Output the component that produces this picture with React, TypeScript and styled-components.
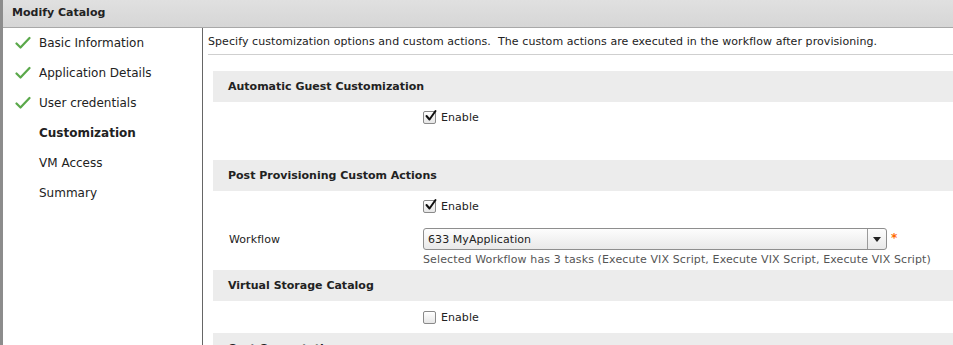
import React from "react";
import styled, { createGlobalStyle } from "styled-components";

const Global = createGlobalStyle`
  html, body { margin: 0; padding: 0; background: #fff; }
  body { font-family: "DejaVu Sans", Verdana, sans-serif; color: #333; overflow: hidden; }
`;

const Frame = styled.div`
  width: 953px;
  height: 345px;
  box-sizing: border-box;
  border-left: 3px solid #8c8c8c;
  display: flex;
  flex-direction: column;
  overflow: hidden;
`;

const TitleBar = styled.div`
  height: 28px;
  flex: 0 0 28px;
  box-sizing: border-box;
  background: linear-gradient(#e0e0e0, #d6d6d6);
  border-bottom: 1px solid #a8a8a8;
  padding-left: 9px;
  padding-bottom: 3px;
  display: flex;
  align-items: center;
  font-size: 11px;
  font-weight: bold;
  color: #222;
`;

const Body = styled.div`
  flex: 1;
  display: flex;
  min-height: 0;
`;

const Sidebar = styled.div`
  width: 199px;
  flex: 0 0 199px;
  border-right: 1px solid #666;
  display: flex;
  flex-direction: column;
`;

const NavItem = styled.div<{ $active?: boolean }>`
  height: 30px;
  flex-shrink: 0;
  display: flex;
  align-items: center;
  padding-left: 12px;
  font-size: 12px;
  font-weight: ${(p) => (p.$active ? "bold" : "normal")};
  color: #222;
`;

const IconSlot = styled.span`
  width: 24px;
  display: inline-flex;
  align-items: center;
`;

const Main = styled.div`
  flex: 1;
  display: flex;
  flex-direction: column;
  min-height: 0;
  letter-spacing: 0.07px;
`;

const Description = styled.div`
  margin-left: 5px;
  height: 27px;
  flex-shrink: 0;
  box-sizing: border-box;
  border-bottom: 1px solid #cfcfcf;
  display: flex;
  align-items: center;
  font-size: 11px;
  color: #222;
`;

const Sections = styled.div`
  padding-left: 10px;
  padding-top: 16px;
  display: flex;
  flex-direction: column;
`;

const SectionHeader = styled.div`
  height: 31px;
  flex-shrink: 0;
  background: #ececec;
  display: flex;
  align-items: center;
  padding-left: 15px;
  font-size: 11px;
  font-weight: bold;
  letter-spacing: 0;
  color: #222;
`;

const Row = styled.div<{ $h: number }>`
  height: ${(p) => p.$h}px;
  flex-shrink: 0;
  display: grid;
  grid-template-columns: 210px 1fr;
  align-items: center;
  font-size: 11px;
  color: #222;
`;

const FieldRow = styled.div`
  flex-shrink: 0;
  display: grid;
  grid-template-columns: 210px 1fr;
  align-items: start;
  padding-top: 7px;
  height: 49px;
  box-sizing: border-box;
  font-size: 11px;
  color: #222;
`;

const Label = styled.div`
  padding-left: 16px;
  height: 22px;
  display: flex;
  align-items: center;
`;

const CheckLabel = styled.label`
  display: flex;
  align-items: center;
  gap: 5px;
`;

const Box = styled.span`
  width: 13px;
  height: 13px;
  box-sizing: border-box;
  border: 1px solid #8a8a8a;
  border-radius: 2px;
  background: linear-gradient(#ffffff, #e6e6e6);
  box-shadow: inset 0 1px 0 #fff;
  position: relative;
  display: inline-block;
`;

const CheckSvg = styled.svg`
  position: absolute;
  left: 0px;
  top: -3px;
`;

const SelectWrap = styled.div`
  display: flex;
  align-items: center;
  gap: 4px;
`;

const Select = styled.div`
  width: 464px;
  height: 22px;
  box-sizing: border-box;
  border: 1px solid #8e8e8e;
  border-radius: 3px;
  background: linear-gradient(#fdfdfd, #e9e9e9);
  display: flex;
  align-items: stretch;
  font-size: 11px;
  color: #222;
`;

const SelectText = styled.div`
  flex: 1;
  display: flex;
  align-items: center;
  padding-left: 4px;
`;

const SelectArrow = styled.div`
  width: 18px;
  border-left: 1px solid #9a9a9a;
  display: flex;
  align-items: center;
  justify-content: center;
`;

const Required = styled.span`
  color: #ff6a00;
  font-size: 12px;
  font-weight: bold;
  margin-top: -2px;
`;

const Helper = styled.div`
  font-size: 11px;
  color: #555;
  margin-top: 3px;
  letter-spacing: 0.12px;
`;

const FieldCol = styled.div`
  display: flex;
  flex-direction: column;
`;

const GreenCheck = () => (
  <svg width="16" height="14" viewBox="0 0 16 14">
    <path d="M1.5 7.5 L5.5 11.5 L14.5 2" fill="none" stroke="#5aa84a" strokeWidth="2.2" strokeLinecap="round" strokeLinejoin="round" />
  </svg>
);

const Checkbox = ({ checked }: { checked?: boolean }) => (
  <CheckLabel>
    <Box>
      {checked && (
        <CheckSvg width="14" height="14" viewBox="0 0 14 14">
          <path d="M2.5 7 L5.5 10.5 L11.5 2" fill="none" stroke="#111" strokeWidth="2" strokeLinecap="round" strokeLinejoin="round" />
        </CheckSvg>
      )}
    </Box>
    Enable
  </CheckLabel>
);

const navItems = [
  { label: "Basic Information", done: true },
  { label: "Application Details", done: true },
  { label: "User credentials", done: true },
  { label: "Customization", active: true },
  { label: "VM Access" },
  { label: "Summary" },
];

export default function App() {
  return (
    <>
      <Global />
      <Frame>
        <TitleBar>Modify Catalog</TitleBar>
        <Body>
          <Sidebar>
            {navItems.map((n) => (
              <NavItem key={n.label} $active={n.active}>
                <IconSlot>{n.done && <GreenCheck />}</IconSlot>
                {n.label}
              </NavItem>
            ))}
          </Sidebar>
          <Main>
            <Description>
              Specify customization options and custom actions.&nbsp; The custom actions are executed in the workflow after provisioning.
            </Description>
            <Sections>
              <SectionHeader>Automatic Guest Customization</SectionHeader>
              <Row $h={30}>
                <div />
                <Checkbox checked />
              </Row>
              <Row $h={28}>
                <div />
                <div />
              </Row>
              <SectionHeader>Post Provisioning Custom Actions</SectionHeader>
              <Row $h={30}>
                <div />
                <Checkbox checked />
              </Row>
              <FieldRow>
                <Label>Workflow</Label>
                <FieldCol>
                  <SelectWrap>
                    <Select>
                      <SelectText>633 MyApplication</SelectText>
                      <SelectArrow>
                        <svg width="8" height="5" viewBox="0 0 8 5">
                          <path d="M0 0 H8 L4 5 Z" fill="#222" />
                        </svg>
                      </SelectArrow>
                    </Select>
                    <Required>*</Required>
                  </SelectWrap>
                  <Helper>Selected Workflow has 3 tasks (Execute VIX Script, Execute VIX Script, Execute VIX Script)</Helper>
                </FieldCol>
              </FieldRow>
              <SectionHeader>Virtual Storage Catalog</SectionHeader>
              <Row $h={32}>
                <div />
                <Checkbox />
              </Row>
              <SectionHeader>Cost Computation</SectionHeader>
            </Sections>
          </Main>
        </Body>
      </Frame>
    </>
  );
}
